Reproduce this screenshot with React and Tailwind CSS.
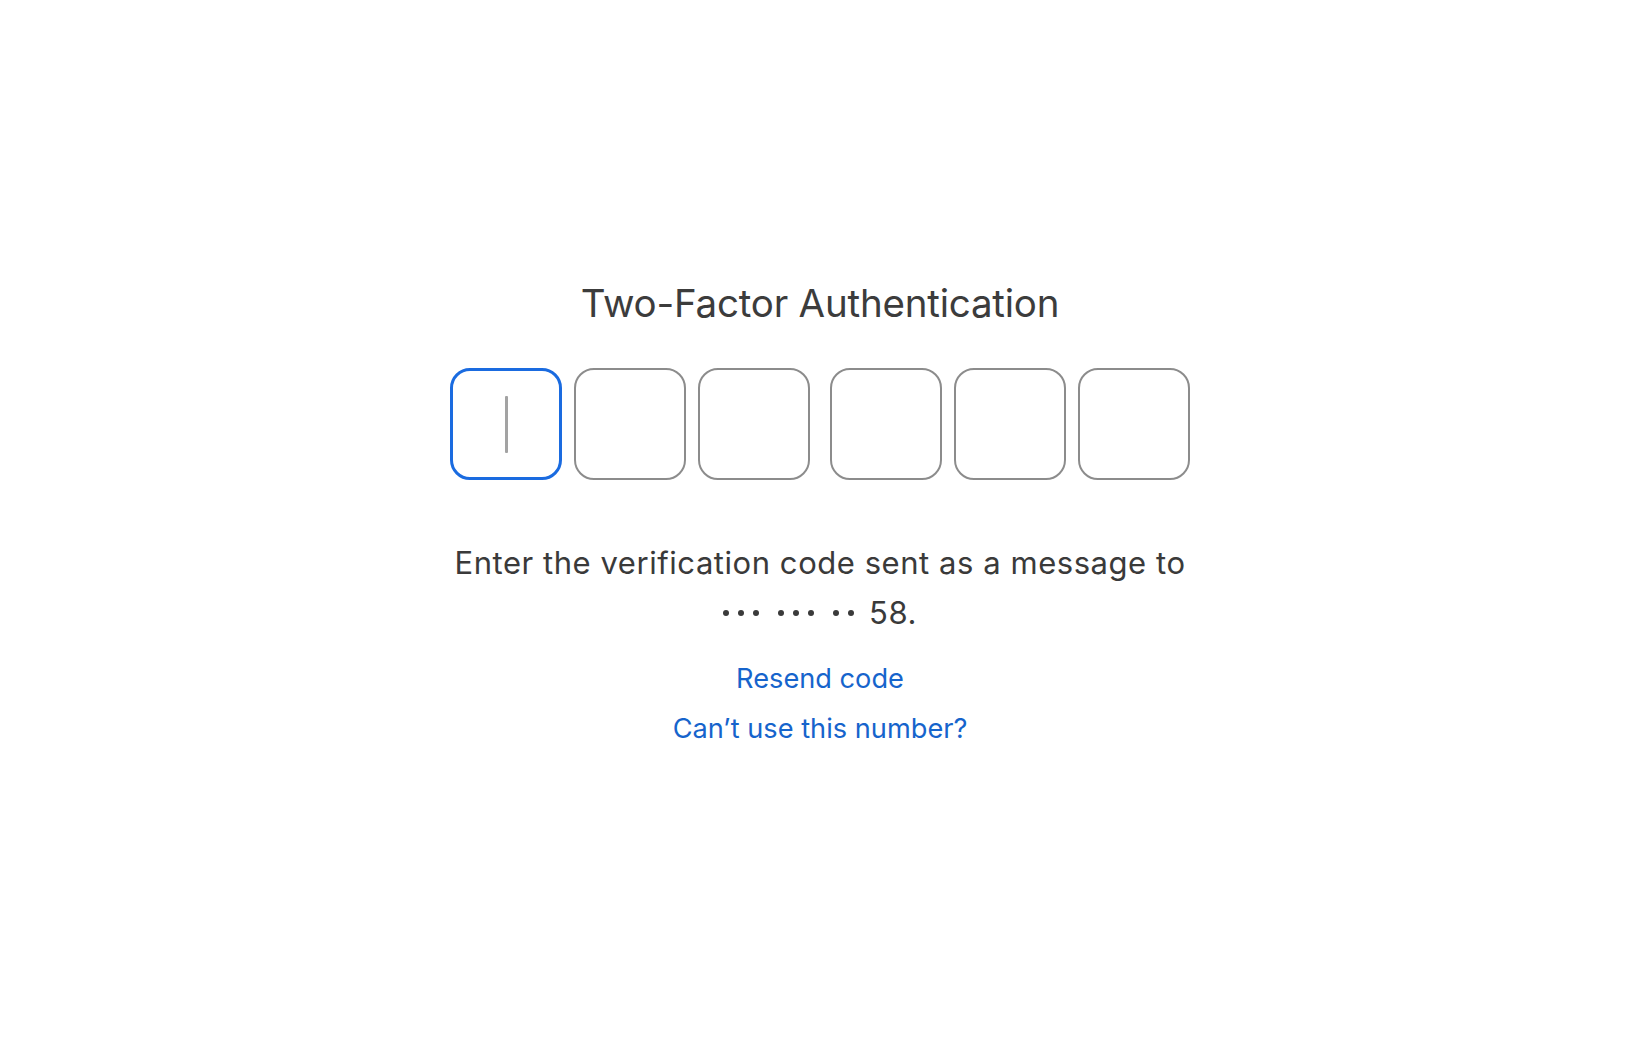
export default function App() {
  const boxes = [0, 1, 2, 3, 4, 5];
  const groups = [3, 3, 2];

  return (
    <div className="min-h-screen bg-white flex flex-col items-center pt-[276px] font-['Inter',_'Noto_Sans',_sans-serif] text-[#3a3a3a]">
      <h1 className="text-[38.5px] leading-[54px] font-normal tracking-[-0.2px] text-[#3c3c3c]">Two-Factor Authentication</h1>

      <div className="mt-[38px] flex">
        {boxes.map((i) => (
          <div
            key={i}
            className={
              i === 0
                ? "w-[112px] h-[112px] rounded-[20px] border-[3.5px] border-[#1a6be0] flex items-center justify-center"
                : `w-[112px] h-[112px] rounded-[20px] border-2 border-[#8c8c8c] ${i === 3 ? "ml-[20px]" : "ml-[12px]"}`
            }
          >
            {i === 0 ? <div className="w-[3px] h-[57px] bg-[#a3a3a3] rounded-[1px]" /> : null}
          </div>
        ))}
      </div>

      <div className="mt-[58px] text-[31px] leading-[50px] tracking-[0.55px] text-center">
        <p>Enter the verification code sent as a message to</p>
        <div className="flex items-center justify-center h-[50px]">
          <div className="flex items-center gap-[19px]">
            {groups.map((n, g) => (
              <div key={g} className="flex items-center gap-[9px]">
                {Array.from({ length: n }).map((_, k) => (
                  <span key={k} className="w-[6px] h-[6px] rounded-full bg-[#3a3a3a]" />
                ))}
              </div>
            ))}
          </div>
          <span className="ml-[15px]">58.</span>
        </div>
      </div>

      <div className="mt-[16px] flex flex-col items-center text-[#1664cc] text-[27.2px] leading-[50px]">
        <a href="#" className="hover:underline">Resend code</a>
        <a href="#" className="hover:underline">Can’t use this number?</a>
      </div>
    </div>
  );
}
